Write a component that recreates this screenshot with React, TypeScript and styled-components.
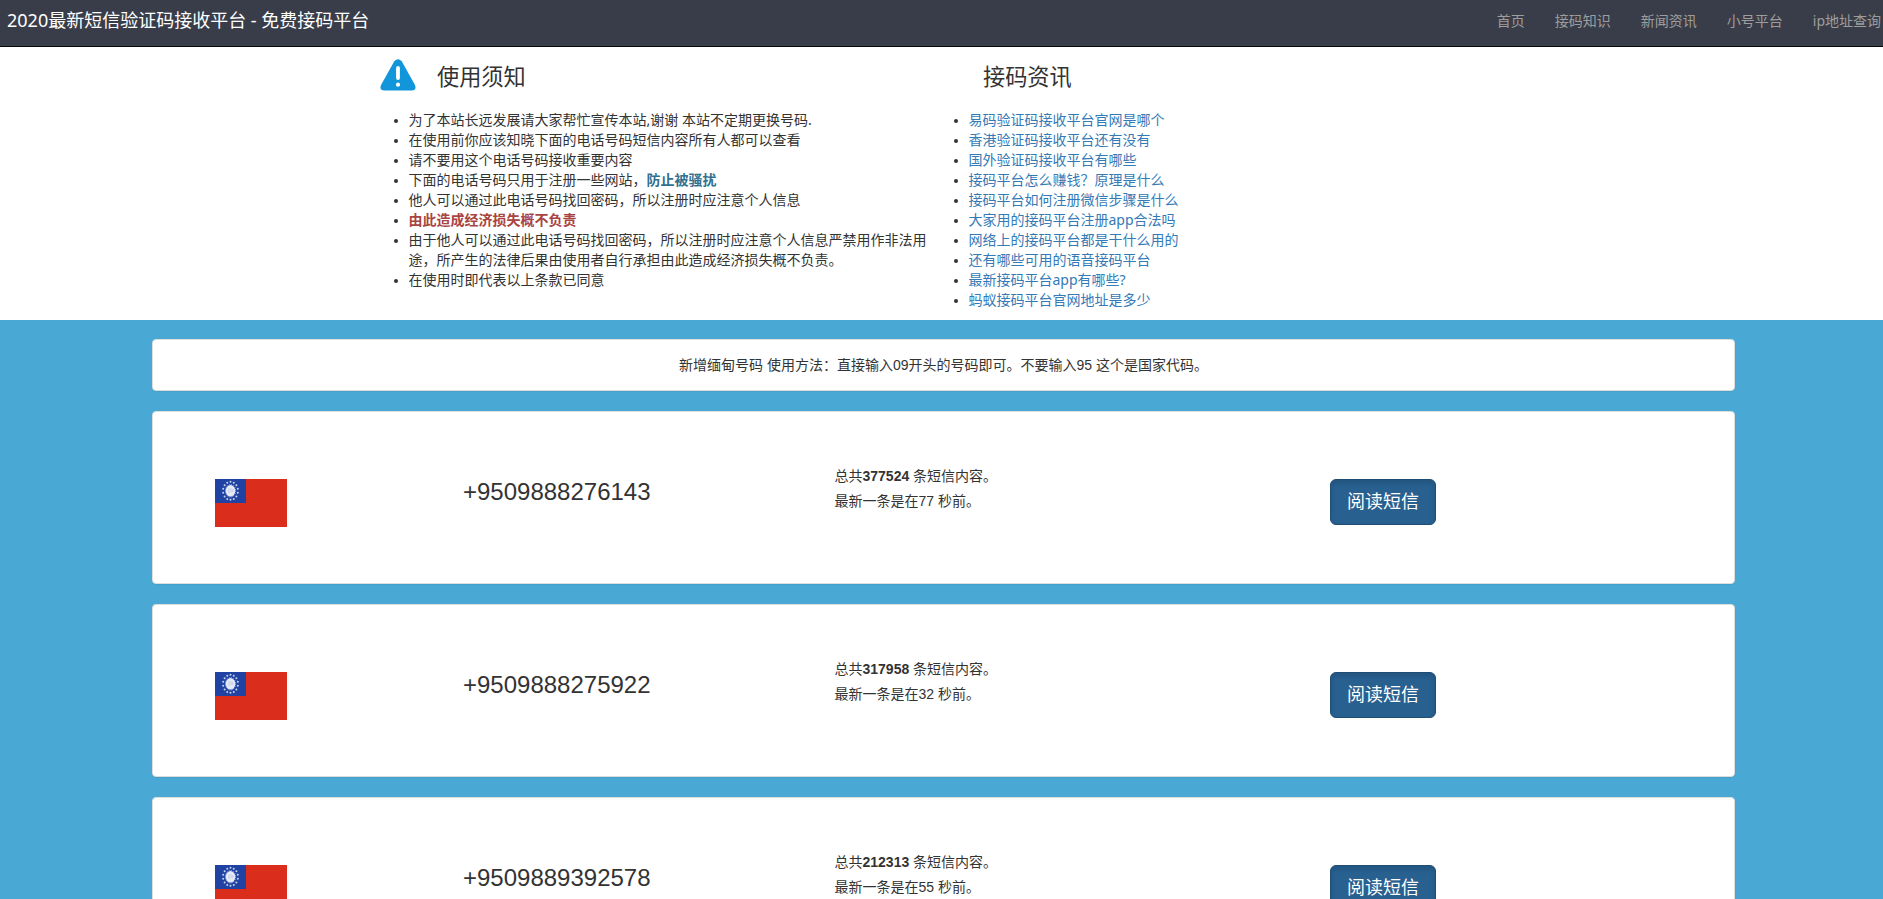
import React from "react";
import styled, { createGlobalStyle } from "styled-components";

const GlobalStyle = createGlobalStyle`
  *, *::before, *::after { box-sizing: border-box; }
  html { height: 100%; }
  body {
    margin: 0;
    height: 100vh;
    overflow: hidden;
    background: #4aa9d4;
    color: #333;
    font: 14px/20px "Liberation Sans", "Noto Sans CJK SC", sans-serif;
  }
`;

const uiFont = `"Noto Sans", "Noto Sans CJK SC", sans-serif`;

const Navbar = styled.nav`
  display: flex;
  justify-content: space-between;
  height: 47px;
  padding-left: 7px;
  background: #393d49;
  border-bottom: 1px solid #080808;
  font-family: ${uiFont};
`;

const Brand = styled.a`
  color: #fff;
  font-size: 18px;
  line-height: 41px;
  white-space: nowrap;
`;

const NavList = styled.div`
  display: flex;
  gap: 30px;
  padding-right: 2px;
`;

const NavLink = styled.a`
  color: #9d9d9d;
  line-height: 41px;
  white-space: nowrap;
`;

const Intro = styled.header`
  display: flex;
  height: 273px;
  padding-left: 368px;
  background: #fff;
  font-family: ${uiFont};
`;

const IntroColumn = styled.section<{ $width: number }>`
  width: ${(p) => p.$width}px;
`;

const Heading = styled.div<{ $indent: number; $gap?: number }>`
  display: flex;
  align-items: flex-start;
  gap: ${(p) => p.$gap ?? 0}px;
  height: 63px;
  padding: 12px 0 0 ${(p) => p.$indent}px;
`;

const HeadingText = styled.h2`
  margin: 2px 0 0;
  font-size: 22.2px;
  line-height: 32px;
  font-weight: 400;
`;

const List = styled.ul`
  margin: 0;
  padding: 0 0 0 40.5px;
`;

const ListItem = styled.li`
  line-height: 20px;

  &::marker {
    font-family: "Liberation Sans", sans-serif;
    font-size: 14px;
  }
`;

const ListLink = styled.a`
  color: #337ab7;
`;

const Emphasis = styled.strong<{ $tone: "info" | "danger" }>`
  color: ${(p) => (p.$tone === "info" ? "#31708f" : "#a94442")};
`;

const Main = styled.main`
  display: flex;
  flex-direction: column;
  gap: 20px;
  width: 1583px;
  margin: 19px 0 0 152px;
`;

const Panel = styled.div`
  background: #fff;
  border: 1px solid #ddd;
  border-radius: 4px;
  box-shadow: 0 1px 1px rgba(0, 0, 0, 0.05);
`;

const Notice = styled(Panel)`
  height: 52px;
  padding: 15px;
  text-align: center;
`;

const NumberCard = styled(Panel)`
  display: grid;
  grid-template-columns: 248px 371px 496px auto;
  align-items: start;
  justify-content: start;
  height: 173px;
  padding: 52px 0 0 62px;
`;

const FlagCell = styled.div`
  padding-top: 15px;
  line-height: 0;
`;

const Phone = styled.div`
  padding-top: 14px;
  font-size: 24px;
  line-height: 28px;
`;

const Stats = styled.div`
  padding-left: 0.5px;
  line-height: 25px;
`;

const ReadButton = styled.button`
  height: 46px;
  width: 106px;
  margin-top: 15px;
  padding: 0 16px;
  border: 1px solid #204d74;
  border-radius: 6px;
  background: #286090;
  box-shadow: inset 0 3px 5px rgba(0, 0, 0, 0.125);
  color: #fff;
  font: 18px/24px "Liberation Sans", "Noto Sans CJK SC", sans-serif;
  white-space: nowrap;
`;

const WarningIcon = () => (
  <svg width="36" height="32" viewBox="0 0 36 32">
    <path
      d="M14.3 2.2Q18-1.6 21.7 2.2L35 26Q37 31.6 31.5 31.6H4.5Q-1 31.6 1 26Z"
      fill="#1296db"
    />
    <rect x="16.1" y="7" width="3.8" height="14" rx="1.9" fill="#fff" />
    <circle cx="18" cy="25.7" r="2.1" fill="#fff" />
  </svg>
);

const starAngles = Array.from({ length: 14 }, (_, i) => (i * Math.PI * 2) / 14);

const MyanmarFlag = () => (
  <svg width="72" height="48" viewBox="0 0 72 48">
    <rect width="72" height="48" fill="#da2d1c" />
    <rect width="31" height="24" fill="#2042a2" />
    <ellipse cx="15.5" cy="11.8" rx="4.8" ry="5.8" fill="#e6eaf6" />
    <ellipse
      cx="15.5"
      cy="11.8"
      rx="5.1"
      ry="6.2"
      fill="none"
      stroke="#b9c4e4"
      strokeWidth="1"
      strokeDasharray="1.1 1.1"
    />
    <path d="M14 9.5v4.5M16 9.3v4M17.8 10v3" stroke="#b5c0e2" strokeWidth="0.7" />
    {starAngles.map((a) => (
      <circle
        key={a}
        cx={15.5 + Math.sin(a) * 7.5}
        cy={11.8 - Math.cos(a) * 9}
        r="1"
        fill="#c9d2ec"
      />
    ))}
  </svg>
);

const navItems = ["首页", "接码知识", "新闻资讯", "小号平台", "ip地址查询"];

const rules: React.ReactNode[] = [
  "为了本站长远发展请大家帮忙宣传本站,谢谢 本站不定期更换号码.",
  "在使用前你应该知晓下面的电话号码短信内容所有人都可以查看",
  "请不要用这个电话号码接收重要内容",
  <>
    下面的电话号码只用于注册一些网站，<Emphasis $tone="info">防止被骚扰</Emphasis>
  </>,
  "他人可以通过此电话号码找回密码，所以注册时应注意个人信息",
  <Emphasis $tone="danger">由此造成经济损失概不负责</Emphasis>,
  "由于他人可以通过此电话号码找回密码，所以注册时应注意个人信息严禁用作非法用途，所产生的法律后果由使用者自行承担由此造成经济损失概不负责。",
  "在使用时即代表以上条款已同意",
];

const news = [
  "易码验证码接收平台官网是哪个",
  "香港验证码接收平台还有没有",
  "国外验证码接收平台有哪些",
  "接码平台怎么赚钱？原理是什么",
  "接码平台如何注册微信步骤是什么",
  "大家用的接码平台注册app合法吗",
  "网络上的接码平台都是干什么用的",
  "还有哪些可用的语音接码平台",
  "最新接码平台app有哪些?",
  "蚂蚁接码平台官网地址是多少",
];

const numbers = [
  { phone: "+9509888276143", total: 377524, seconds: 77 },
  { phone: "+9509888275922", total: 317958, seconds: 32 },
  { phone: "+9509889392578", total: 212313, seconds: 55 },
];

export default function App() {
  return (
    <>
      <GlobalStyle />
      <Navbar>
        <Brand>2020最新短信验证码接收平台 - 免费接码平台</Brand>
        <NavList>
          {navItems.map((item) => (
            <NavLink key={item}>{item}</NavLink>
          ))}
        </NavList>
      </Navbar>
      <Intro>
        <IntroColumn $width={560}>
          <Heading $indent={12} $gap={21}>
            <WarningIcon />
            <HeadingText>使用须知</HeadingText>
          </Heading>
          <List>
            {rules.map((rule, i) => (
              <ListItem key={i}>{rule}</ListItem>
            ))}
          </List>
        </IntroColumn>
        <IntroColumn $width={560}>
          <Heading $indent={55}>
            <HeadingText>接码资讯</HeadingText>
          </Heading>
          <List>
            {news.map((title) => (
              <ListItem key={title}>
                <ListLink>{title}</ListLink>
              </ListItem>
            ))}
          </List>
        </IntroColumn>
      </Intro>
      <Main>
        <Notice>
          新增缅甸号码 使用方法：直接输入09开头的号码即可。不要输入95 这个是国家代码。
        </Notice>
        {numbers.map((n) => (
          <NumberCard key={n.phone}>
            <FlagCell>
              <MyanmarFlag />
            </FlagCell>
            <Phone>{n.phone}</Phone>
            <Stats>
              <div>
                总共<b>{n.total}</b> 条短信内容。
              </div>
              <div>最新一条是在{n.seconds} 秒前。</div>
            </Stats>
            <ReadButton>阅读短信</ReadButton>
          </NumberCard>
        ))}
      </Main>
    </>
  );
}
